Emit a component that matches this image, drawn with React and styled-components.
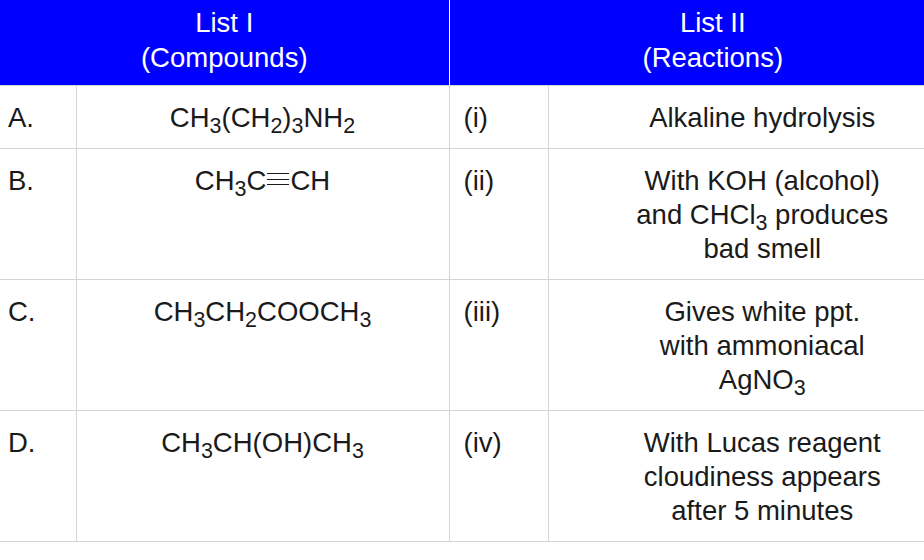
import React from "react";
import styled, { createGlobalStyle } from "styled-components";

const GlobalStyle = createGlobalStyle`
  html, body {
    margin: 0;
    overflow: hidden;
    background: #ffffff;
    font-family: "Liberation Sans", Arial, sans-serif;
  }
`;

const Frame = styled.div`
  width: 924px;
  overflow: hidden;
`;

const Table = styled.table`
  width: 976px;
  table-layout: fixed;
  border-collapse: collapse;
  font-size: 27.5px;
  line-height: 34px;
  color: #1a1a1a;
`;

const HeadCell = styled.th`
  background: #0000ff;
  color: #ffffff;
  font-weight: normal;
  line-height: 35px;
  text-align: center;
  padding: 5px 12px 10px;
  border-left: ${(props) => (props.divider ? "1px solid #ffffff" : "none")};
  border-bottom: 1px solid #d4d4d4;
`;

const Row = styled.tr`
  border-bottom: 1px solid #d4d4d4;
`;

const Cell = styled.td`
  vertical-align: top;
  padding: 15px 12px 13px ${(props) => props.padLeft || 12}px;
  text-align: ${(props) => (props.center ? "center" : "left")};
  border-left: ${(props) => (props.first ? "none" : "1px solid #d4d4d4")};
`;

const Sub = styled.sub`
  font-size: 0.78em;
  vertical-align: -0.28em;
  line-height: 0;
`;

const TripleBond = styled.span`
  display: inline-block;
  width: 22px;
  height: 10px;
  margin: 0 1px;
  vertical-align: 5px;
  border-top: 1px solid #1a1a1a;
  border-bottom: 1px solid #1a1a1a;
  background: linear-gradient(#1a1a1a, #1a1a1a) center / 100% 1px no-repeat;
`;

const rows = [
  {
    key: "A.",
    compound: (
      <>
        CH<Sub>3</Sub>(CH<Sub>2</Sub>)<Sub>3</Sub>NH<Sub>2</Sub>
      </>
    ),
    num: "(i)",
    reaction: <>Alkaline hydrolysis</>,
  },
  {
    key: "B.",
    compound: (
      <>
        CH<Sub>3</Sub>C
        <TripleBond aria-label="≡" />
        CH
      </>
    ),
    num: "(ii)",
    reaction: (
      <>
        With KOH (alcohol)
        <br />
        and CHCl<Sub>3</Sub> produces
        <br />
        bad smell
      </>
    ),
  },
  {
    key: "C.",
    compound: (
      <>
        CH<Sub>3</Sub>CH<Sub>2</Sub>COOCH<Sub>3</Sub>
      </>
    ),
    num: "(iii)",
    reaction: (
      <>
        Gives white ppt.
        <br />
        with ammoniacal
        <br />
        AgNO<Sub>3</Sub>
      </>
    ),
  },
  {
    key: "D.",
    compound: (
      <>
        CH<Sub>3</Sub>CH(OH)CH<Sub>3</Sub>
      </>
    ),
    num: "(iv)",
    reaction: (
      <>
        With Lucas reagent
        <br />
        cloudiness appears
        <br />
        after 5 minutes
      </>
    ),
  },
];

export default function App() {
  return (
    <Frame>
      <GlobalStyle />
      <Table>
        <colgroup>
          <col style={{ width: 76 }} />
          <col style={{ width: 373 }} />
          <col style={{ width: 99 }} />
          <col style={{ width: 428 }} />
        </colgroup>
        <thead>
          <tr>
            <HeadCell colSpan={2}>
              List I
              <br />
              (Compounds)
            </HeadCell>
            <HeadCell colSpan={2} divider>
              List II
              <br />
              (Reactions)
            </HeadCell>
          </tr>
        </thead>
        <tbody>
          {rows.map((r) => (
            <Row key={r.key}>
              <Cell first padLeft={8}>
                {r.key}
              </Cell>
              <Cell center>{r.compound}</Cell>
              <Cell padLeft={14}>{r.num}</Cell>
              <Cell center>{r.reaction}</Cell>
            </Row>
          ))}
        </tbody>
      </Table>
    </Frame>
  );
}
